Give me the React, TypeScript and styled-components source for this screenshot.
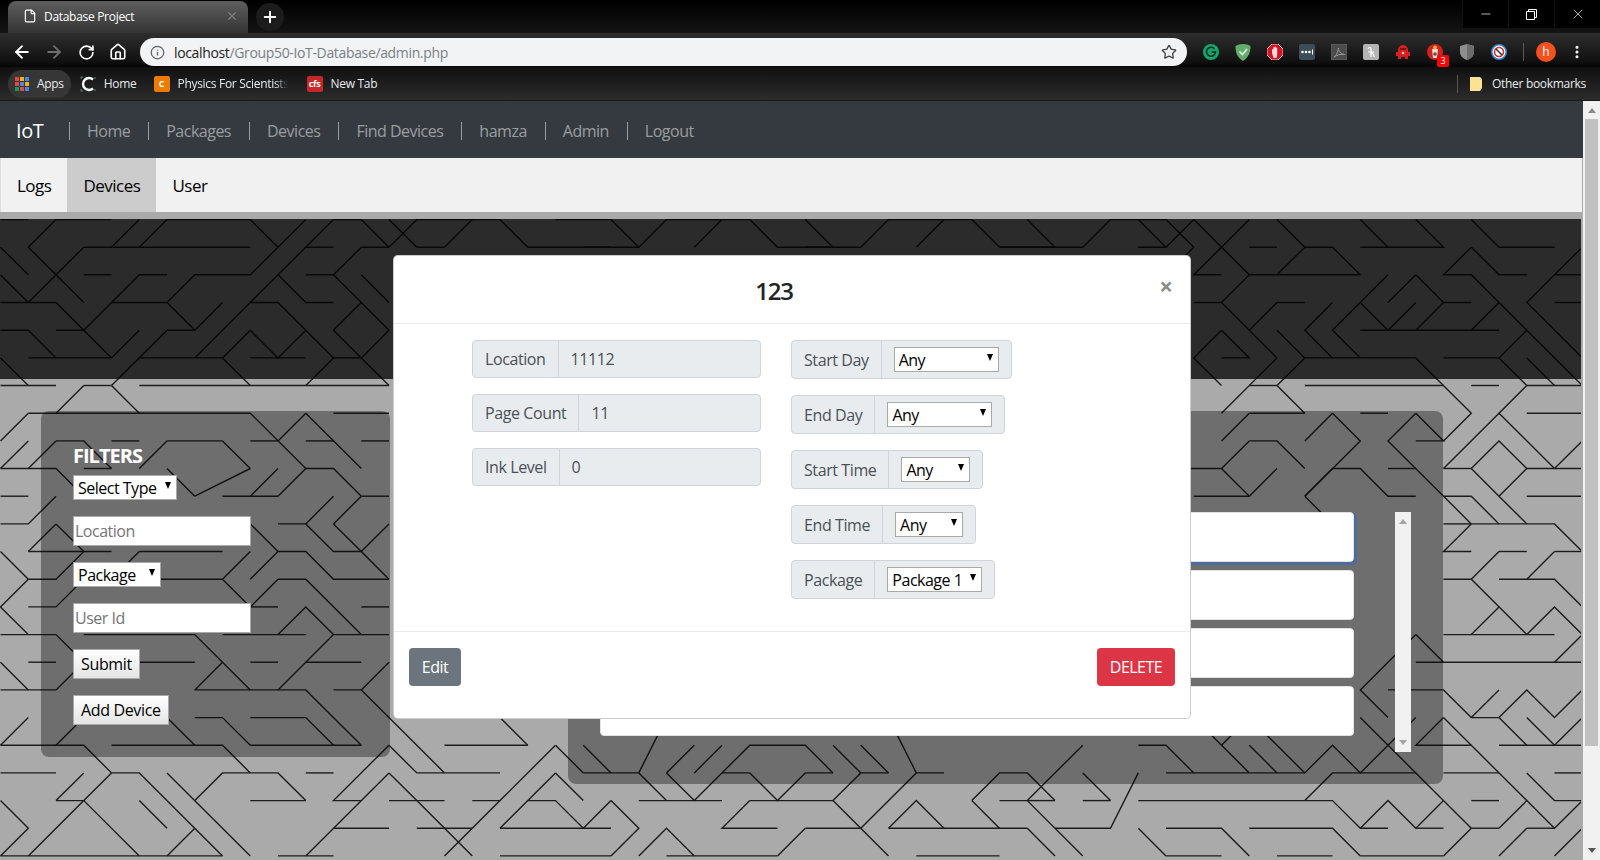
import React from "react"
import styled, { createGlobalStyle } from "styled-components"
import { ArrowLeft, ArrowRight, RotateCw, Home, Star, Info, Minus, X, Plus, File, MoreVertical } from "lucide-react"

const GlobalStyle = createGlobalStyle`
  html, body {
    margin: 0;
    padding: 0;
    overflow: hidden;
    background: #aaa;
  }
  * {
    box-sizing: border-box;
  }
  body, input, select, button {
    font-family: "Open Sans", "Noto Sans", sans-serif;
  }
`

const Page = styled.div`
  position: relative;
  width: 1600px;
  height: 860px;
  overflow: hidden;
  display: flex;
  flex-direction: column;
`

/* browser chrome */
const TabStrip = styled.div`
  height: 33px;
  flex: none;
  background: linear-gradient(#000, #141414);
  display: flex;
  align-items: flex-end;
  padding-left: 8px;
  position: relative;
`

const Tab = styled.div`
  width: 240px;
  height: 32px;
  border-radius: 8px 8px 0 0;
  background: linear-gradient(#5e5e5e, #343434);
  display: flex;
  align-items: center;
  padding: 0 9px 2px 15px;
  color: #fff;
  font-size: 12px;
  letter-spacing: -0.3px;
  gap: 7px;
`

const TabTitle = styled.span`
  flex: 1;
`

const NewTab = styled.div`
  width: 28px;
  height: 28px;
  border-radius: 50%;
  background: #1c1c1c;
  margin: 0 0 2px 8px;
  display: flex;
  align-items: center;
  justify-content: center;
  color: #fff;
`

const WindowControls = styled.div`
  position: absolute;
  right: 0;
  top: 0;
  height: 28px;
  display: flex;
  background: #000;
`

const WindowButton = styled.div`
  width: 46px;
  height: 28px;
  display: flex;
  align-items: center;
  justify-content: center;
  color: #fff;
  border-left: 1px solid #111;
`

const Toolbar = styled.div`
  height: 34px;
  flex: none;
  background: linear-gradient(#2e2e2e, #101010 85%, #050505);
  display: flex;
  align-items: flex-start;
  padding: 5px 0 0 6px;
  position: relative;
  z-index: 1;
`

const ToolButton = styled.div<{ $dim?: boolean }>`
  width: 32px;
  height: 28px;
  display: flex;
  align-items: center;
  justify-content: center;
  color: ${p => (p.$dim ? "#6f6f6f" : "#fff")};
`

const AddressBar = styled.div`
  width: 1047px;
  height: 28px;
  margin-left: 6px;
  border-radius: 14px;
  background: #f1f3f4;
  display: flex;
  align-items: center;
  padding: 0 10px 0 10px;
  font-size: 14px;
  letter-spacing: -0.35px;
  color: #7a8087;
`

const Host = styled.span`
  color: #202124;
`

const AddressText = styled.div`
  flex: 1;
  margin-left: 9px;
`

const Extensions = styled.div`
  display: flex;
  align-items: center;
  height: 28px;
  margin-left: 8px;
`

const ExtensionSlot = styled.div`
  width: 32px;
  height: 28px;
  display: flex;
  align-items: center;
  justify-content: center;
  position: relative;
`

const Badge = styled.span`
  position: absolute;
  right: 2px;
  bottom: -1px;
  width: 12px;
  height: 12px;
  background: #f00;
  color: #fff;
  border-radius: 2px;
  font-size: 9px;
  line-height: 12px;
  text-align: center;
`

const ToolbarDivider = styled.div`
  width: 1px;
  height: 18px;
  margin: 0 7px 0 8px;
  background: #5a5a5a;
`

const Avatar = styled.div`
  width: 20px;
  height: 20px;
  border-radius: 50%;
  background: #f4511e;
  color: #fff;
  font-size: 12px;
  line-height: 20px;
  text-align: center;
  margin: 0 5px;
`

const BookmarksBar = styled.div`
  height: 34px;
  flex: none;
  background: linear-gradient(#101010, #2c2c2c);
  border-bottom: 1px solid #181818;
  display: flex;
  align-items: center;
  padding-left: 8px;
  color: #e8eaed;
  font-size: 12px;
  letter-spacing: -0.3px;
`

const Bookmark = styled.div<{ $chip?: boolean; $left?: number }>`
  display: flex;
  align-items: center;
  gap: 8px;
  height: 28px;
  padding: 0 7px;
  margin-left: ${p => p.$left ?? 0}px;
  border-radius: 14px;
  background: ${p => (p.$chip ? "#363636" : "transparent")};
`

const FadedLabel = styled.span`
  width: 110px;
  white-space: nowrap;
  overflow: hidden;
  -webkit-mask-image: linear-gradient(90deg, #000 88%, transparent);
`

const BookmarkIcon = styled.span<{ $bg: string }>`
  width: 16px;
  height: 16px;
  border-radius: 2px;
  background: ${p => p.$bg};
  color: #fff;
  font-size: 9px;
  font-weight: 700;
  line-height: 16px;
  text-align: center;
`

const OtherBookmarks = styled.div`
  margin-left: auto;
  display: flex;
  align-items: center;
  height: 18px;
  border-left: 1px solid #555;
  padding: 0 14px 0 12px;
  gap: 10px;
`

/* site */
const Viewport = styled.div`
  flex: 1;
  display: flex;
  min-height: 0;
`

const Site = styled.div`
  width: 1583px;
  display: flex;
  flex-direction: column;
`

const NavBar = styled.nav`
  height: 57px;
  flex: none;
  background: #343a40;
  display: flex;
  align-items: center;
  padding: 2px 0 0 16px;
`

const Brand = styled.div`
  color: #fff;
  font-size: 20px;
  width: 53px;
  letter-spacing: -0.4px;
`

const NavLink = styled.a`
  color: rgba(255, 255, 255, 0.5);
  font-size: 16px;
  padding: 0 18px 0 17px;
  line-height: 18px;
  border-left: 1px solid rgba(255, 255, 255, 0.5);
  letter-spacing: -0.5px;
`

const TabBar = styled.div`
  height: 54px;
  flex: none;
  background: #f1f1f1;
  display: flex;
  width: 1582px;
  border-left: 1px solid #ddd;
`

const TabLink = styled.a<{ $active?: boolean }>`
  padding: 0 16px;
  height: 54px;
  font-size: 17px;
  line-height: 56px;
  color: #000;
  letter-spacing: -0.5px;
  background: ${p => (p.$active ? "#ccc" : "transparent")};
`

const Main = styled.main`
  position: relative;
  flex: 1;
  width: 1581px;
  padding-top: 7px;
  background: #aaa;
  overflow: hidden;
`

const Maze = styled.svg`
  position: absolute;
  left: 0;
  top: 7px;
`

const Band = styled.div`
  position: relative;
  height: 160px;
  background: rgba(0, 0, 0, 0.75);
`

const Columns = styled.div`
  position: relative;
  display: flex;
  align-items: flex-start;
  margin-top: 32px;
  padding-left: 41px;
  gap: 178px;
`

const FilterPanel = styled.div`
  width: 349px;
  height: 346px;
  padding: 32px;
  border-radius: 8px;
  background: rgba(0, 0, 0, 0.35);
  display: flex;
  flex-direction: column;
  align-items: flex-start;
  gap: 16px;
`

const FilterHeading = styled.h2`
  margin: 0 0 -16px;
  height: 32px;
  color: #fff;
  font-size: 20px;
  font-weight: 700;
  line-height: 26px;
  letter-spacing: -1px;
`

const SelectWrap = styled.span<{ $width: number }>`
  position: relative;
  display: block;
  width: ${p => p.$width}px;
  height: 25px;
  flex: none;

  &::after {
    content: "";
    position: absolute;
    right: 6px;
    top: 7px;
    border-left: 3.5px solid transparent;
    border-right: 3.5px solid transparent;
    border-top: 7px solid #000;
    pointer-events: none;
  }
`

const Select = styled.select`
  appearance: none;
  display: block;
  width: 100%;
  height: 100%;
  padding: 1px 0 0 4px;
  border: 1px solid #a9a9a9;
  border-radius: 0;
  background: #fff;
  color: #000;
  font-size: 16px;
  letter-spacing: -0.5px;
`

const FilterInput = styled.input`
  width: 178px;
  height: 30px;
  padding: 0 1px;
  border: 1px solid #a9a9a9;
  background: #fff;
  font-size: 16px;
  letter-spacing: -0.5px;

  &::placeholder {
    color: #757575;
  }
`

const PlainButton = styled.button`
  height: 30px;
  padding: 0 7px;
  border: 1px solid #a9a9a9;
  background: linear-gradient(#fff, #e4e4e4);
  color: #000;
  font-size: 16px;
  letter-spacing: -0.35px;
`

const ListPanel = styled.div`
  width: 875px;
  height: 373px;
  padding: 101px 0 0 32px;
  border-radius: 8px;
  background: rgba(0, 0, 0, 0.35);
  display: flex;
  align-items: flex-start;
  gap: 41px;
`

const DeviceList = styled.div`
  width: 754px;
  display: flex;
  flex-direction: column;
  gap: 8px;
`

const DeviceRow = styled.div<{ $focused?: boolean }>`
  height: 50px;
  border-radius: 4px;
  border: 1px solid #e2e2e2;
  background: #fff;
  box-shadow: ${p => (p.$focused ? "2px 2px 0 1px #4a6d9c" : "none")};
`

const ScrollArrow = styled.span<{ $down?: boolean; $color: string }>`
  display: block;
  width: 0;
  height: 0;
  border-left: 4.5px solid transparent;
  border-right: 4.5px solid transparent;
  ${p => (p.$down ? `border-top: 5px solid ${p.$color};` : `border-bottom: 5px solid ${p.$color};`)}
`

const ListScroll = styled.div`
  width: 16px;
  height: 240px;
  padding: 7px 0;
  background: #f1f1f1;
  display: flex;
  flex-direction: column;
  justify-content: space-between;
  align-items: center;
`

/* modal */
const Modal = styled.div`
  position: absolute;
  left: 393px;
  top: 255px;
  width: 798px;
  height: 464px;
  background: #fff;
  border: 1px solid rgba(0, 0, 0, 0.2);
  border-radius: 5px;
  display: flex;
  flex-direction: column;
`

const ModalHeader = styled.div`
  height: 68px;
  flex: none;
  border-bottom: 1px solid #e9ecef;
  display: flex;
  align-items: center;
  padding: 0 16px 0 0;
`

const ModalTitle = styled.h5`
  flex: 1;
  margin: 2px 0 0;
  padding-right: 4px;
  text-align: center;
  color: #212529;
  font-size: 24px;
  font-weight: 600;
  letter-spacing: -1.2px;
`

const Close = styled.span`
  width: 16px;
  margin: -8px 0 0 0;
  color: #8c8c8c;
  font-size: 24px;
  font-weight: 700;
  line-height: 24px;
  text-align: center;
`

const ModalBody = styled.div`
  flex: 1;
  display: flex;
  gap: 30px;
  padding: 16px 0 0 78px;
`

const FieldColumn = styled.div<{ $gap: number; $width: number }>`
  display: flex;
  flex-direction: column;
  align-items: flex-start;
  gap: ${p => p.$gap}px;
  width: ${p => p.$width}px;
`

const InputGroup = styled.div<{ $full?: boolean; $height: number }>`
  display: flex;
  width: ${p => (p.$full ? "100%" : "auto")};
  height: ${p => p.$height}px;
  color: #495057;
  font-size: 16px;
  letter-spacing: -0.4px;
`

const GroupLabel = styled.div`
  display: flex;
  align-items: center;
  padding: 0 12px;
  background: #e9ecef;
  border: 1px solid #ced4da;
  border-radius: 4px 0 0 4px;
  white-space: nowrap;
`

const GroupValue = styled.div`
  flex: 1;
  display: flex;
  align-items: center;
  padding: 0 12px;
  margin-left: -1px;
  background: #e9ecef;
  border: 1px solid #ced4da;
  border-radius: 0 4px 4px 0;
`

const GroupSelect = styled.div`
  display: flex;
  align-items: center;
  padding: 0 12px;
  margin-left: -1px;
  background: #e9ecef;
  border: 1px solid #ced4da;
  border-radius: 0 4px 4px 0;
`

const ModalFooter = styled.div`
  height: 87px;
  flex: none;
  border-top: 1px solid #e9ecef;
  display: flex;
  justify-content: space-between;
  align-items: flex-start;
  padding: 16px 15px;
`

const ActionButton = styled.button<{ $bg: string; $width: number }>`
  width: ${p => p.$width}px;
  height: 38px;
  border: 0;
  border-radius: 4px;
  background: ${p => p.$bg};
  color: #fff;
  font-size: 16px;
  letter-spacing: -0.5px;
`

/* page scrollbar */
const PageScroll = styled.div`
  width: 17px;
  padding: 7px 0;
  background: #f1f1f1;
  display: flex;
  flex-direction: column;
  align-items: center;
`

const ScrollThumb = styled.div`
  width: 13px;
  height: 627px;
  margin-top: 6px;
  background: #c1c1c1;
`

const ScrollEnd = styled.div`
  margin-top: auto;
`

// maze, as polylines in grid cells "col row col row ..."
const MAZE = [
  // left side
  "0 0 1 0", "2 0 1 1 3 3", "2 0 4 0", "6 0 9 0 10 1", "5 0 4 1", "6 0 5 1", "12 0 13 0", "3 1 9 1", "3 1 1 3",
  "11 0 9 2 7 2 6 3 7 4 8 3", "12 0 7 5", "13 0 14 1", "14 0 15 1", "0 1 1 2", "0 2 1 3", "0 3 2 3 4 5", "2 4 3 4", "3 2 4 2",
  "6 2 5 2 3 4", "4 3 6 3", "6 4 7 4", "6 4 4 6", "0 4 1 4 2 5", "1 5 4 5", "5 4 4 5", "5 5 8 5 9 6", "8 5 9 4 10 5 11 4",
  "9 5 11 5", "9 3 10 3 12 5", "10 2 11 3 12 3", "11 1 12 1", "11 2 12 2", "13 1 12 2 14 4", "13 1 14 1", "13 2 14 3",
  "13 3 12 4 13 5 14 4", "12 5 13 5", "12 5 11 6", "13 5 14 6", "0 6 2 6", "0 5 1 6", "5 6 14 6", "3 6 4 6", "2 7 3 6", "4 6 5 7",
  "1 7 9 7 11 9", "1 7 0 8", "11 7 10 8", "11 7 13 9", "12 7 14 7", "4 8 5 8", "1 8 0 9", "2 8 3 8 4 9", "2 8 1 9", "8 8 6 8 5 9",
  "8 8 9 9", "9 8 10 8", "11 8 12 8", "13 8 14 8", "0 9 2 9 3 10", "3 9 4 9", "9 9 7 10", "10 9 9 10", "11 9 10 10", "11 9 12 9 13 10",
  "6 9 7 10", "0 10 1 10", "8 10 10 10", "13 10 14 10", "0 11 1 11 2 10", "2 11 1 12", "2 11 3 12", "1 12 4 12", "5 12 8 12", "5 12 4 13",
  "0 12 1 13 2 13 3 12", "1 13 0 14 1 15", "1 14 2 14 3 13", "0 15 2 15 3 16 2 17", "0 16 1 17", "0 17 2 17", "1 16 2 16",
  "5 13 8 13 9 12", "8 13 9 14 10 13 11 13 13 15", "9 13 10 12 9 11", "10 12 11 12 12 13 14 13", "10 11 11 11 12 12 13 12 14 13", "11 11 12 10", "12 11 13 10",
  "12 11 13 12 14 11", "9 14 10 14", "13 14 14 14", "10 15 11 14 12 15 10 17", "8 15 11 15", "12 15 14 15", "3 15 7 15 9 17",
  "8 16 7 17", "7 17 11 17 13 19", "9 16 10 16", "11 16 13 16", "14 16 13 17", "12 17 13 17 16 20", "4 16 7 16", "7 18 8 18 9 19",
  "9 18 11 18 12 19", "9 19 13 19", "6 18 7 19", "4 19 8 19 9 20", "1 18 0 19", "3 18 2 19", "0 19 3 19 4 20 5 20 8 23", "3 20 2 21", "0 20 2 20",
  "4 20 3 21", "6 20 9 23", "7 21 8 20 10 20 11 21", "11 20 12 20", "14 19 15 20 18 20", "14 19 12 21 13 21", "14 20 15 21", "14 20 11 23", "12 22 14 22",
  "0 21 1 22 0 23", "2 21 3 21 5 23", "3 21 1 23", "5 21 6 22", "7 22 6 23", "9 21 11 21", "0 23 8 23", "10 23 12 23",
  // top strip
  "14 1 15 0 18 0 19 1 23 1 24 0 27 0 28 1 31 1 32 0 35 0 36 1 39 1 40 0 42 0 43 1", "16 1 17 0", "20 0 22 0 23 1", "25 1 26 0", "29 0 30 1",
  "33 1 34 0", "37 0 38 1", "41 0 42 1", "15 1 16 1", "21 1 22 1", "29 1 30 1", "36 1 38 1",
  // right side, upper
  "41 1 42 1 43 0", "45 1 46 1", "44 1 43 2 44 2", "44 1 45 2 46 2 49 2", "43 0 44 1 45 0", "43 1 42 2", "46 0 47 1 46 2", "47 1 48 1 49 2",
  "49 1 52 1 51 0", "50 1 49 0", "54 1 56 1", "54 1 53 0", "45 2 44 3 46 5", "43 3 44 3", "46 3 45 4", "46 3 47 3", "48 3 47 4 48 5",
  "50 2 48 4 49 5", "49 3 50 4", "51 2 50 3", "51 2 52 3 51 4", "51 3 50 4", "52 3 53 3", "49 4 54 4", "53 1 52 2 53 2 55 4", "53 1 54 2 55 2",
  "54 3 53 4", "55 4 54 5 55 6", "52 5 54 5", "55 4 57 6", "57 1 56 2 55 3 57 5", "56 2 57 2", "56 3 57 3", "55 5 56 6", "45 6 46 6", "47 6 52 6", "53 6 54 6", "55 6 57 6",
  "46 4 47 5 46 6", "47 5 51 5 53 7 52 8", "44 4 43 5 44 6", "44 4 45 5 44 5", "46 5 44 7", "46 6 47 7", "45 7 47 7", "45 7 44 8", "49 7 50 7",
  "48 7 47 8", "48 7 49 8 47 10", "51 7 50 8 53 11", "51 7 52 8 51 8", "45 8 46 8 47 9", "45 8 44 9 41 9", "44 9 45 10", "46 9 45 10 43 10",
  "47 10 48 11", "47 10 48 9 49 9 50 10 51 10", "50 9 51 9", "52 9 54 7 56 9", "52 9 53 9", "53 9 54 8 55 9 54 10 53 9", "55 9 57 9", "56 9 57 8", "54 10 55 11",
  "52 10 53 10 54 11", "55 7 57 7", "55 6 54 7", "55 10 57 10", "52 11 53 11", "53 11 56 11 57 12", "53 11 52 12 53 12", "56 12 55 13", "54 12 55 12", "54 12 53 13", "56 12 57 12",
  "52 13 53 13 55 15", "54 13 56 13 57 14", "54 14 53 15", "55 15 56 14 57 15 56 16", "52 15 56 15", "51 16 57 16", "51 15 52 16", "51 15 50 16", "50 16 49 17 50 18",
  "50 17 52 17 53 18 54 18", "53 18 54 17", "54 18 55 17 56 18 57 17", "54 18 55 19", "55 18 56 19 57 18", "54 19 57 19", "52 18 51 19 53 19", "52 18 55 21",
  "52 20 54 20", "55 20 56 21 57 21", "56 20 57 20", "53 21 54 21", "54 22 55 21 56 22 57 21", "53 22 54 22", "42 20 47 20 48 19 49 20 51 18", "47 21 48 20 51 20 53 22 52 23",
  "41 21 48 21 49 22 50 22", "49 22 50 21 51 22 52 21", "51 22 52 22", "42 22 44 22 45 23", "45 22 48 22 49 23", "42 23 44 23", "41 22 42 23", "46 23 48 23", "49 23 52 23", "55 22 54 23", "55 22 56 22", "57 22 56 23",
  "41 19 42 19 43 20", "43 18 45 20", "44 19 45 18", "45 19 46 20", "45 18 47 20", "49 18 51 20",
  // bottom strip
  "16 19 19 19", "18 18 19 19", "20 19 18 21 17 21", "20 19 21 20", "15 21 17 23", "14 21 16 21", "18 21 16 23", "20 20 18 22", "20 20 21 21", "19 21 20 21 21 22", "18 22 22 22", "15 22 17 22",
  "22 21 21 22", "22 21 23 22 22 23", "23 23 24 22 25 23", "23 21 26 21", "21 19 22 20", "21 20 23 20 24 21", "23 20 24 18", "24 20 25 21 27 19 29 19 30 20", "24 20 25 19", "26 20 27 20 28 21 29 20 30 20",
  "25 20 26 19", "27 21 30 21", "27 21 26 22 28 22", "30 21 31 20 32 20", "30 19 31 20", "31 19 32 20", "30 21 31 22 33 20 34 20", "32 18 33 20", "29 22 31 22 32 23", "29 22 28 23", "32 22 37 22",
  "32 22 33 21 34 22", "35 21 36 22", "35 21 36 20 37 20 38 21", "36 21 37 21 39 23", "37 22 38 23", "37 21 38 21", "39 21 40 21", "37 21 39 19", "39 20 40 21", "41 20 40 22 38 22", "18 23 22 23", "24 23 28 23", "33 23 36 23",
]

const CELL_X = 27.75
const CELL_Y = 27.67

const mazePath = (line: string) => {
  const n = line.split(" ").map(Number)
  let d = ""
  for (let i = 0; i < n.length; i += 2) {
    d += `${i === 0 ? "M" : "L"}${(n[i] * CELL_X + 0.5).toFixed(1)} ${(n[i + 1] * CELL_Y + 0.5).toFixed(1)}`
  }
  return d
}

function MazeBackground() {
  return (
    <Maze width="1581" height="641" fill="none" stroke="#1c1c1c" strokeWidth="1.4">
      {MAZE.map((line, i) => <path key={i} d={mazePath(line)} />)}
    </Maze>
  )
}

const APPS_COLORS = ["#e8453c", "#f4b400", "#4285f4", "#e8453c", "#4285f4", "#f4b400", "#0f9d58", "#e8453c", "#4285f4"]

function AppsIcon() {
  return (
    <svg width="14" height="14" viewBox="0 0 14 14">
      {APPS_COLORS.map((c, i) => (
        <rect key={i} x={(i % 3) * 5} y={Math.floor(i / 3) * 5} width="4" height="4" fill={c} />
      ))}
    </svg>
  )
}

function HomeSiteIcon() {
  return (
    <svg width="16" height="16" viewBox="0 0 16 16" fill="none">
      <path d="M13 3.500A6 6 0 1 0 13 12.500" stroke="#fff" strokeWidth="2.400" />
      <path d="M1 1v2M1 1h2M15 1v2M1 15v-2M1 15h2M15 15v-2" stroke="#5a7" strokeWidth="0.800" />
    </svg>
  )
}

function FolderIcon() {
  return (
    <svg width="12" height="14" viewBox="0 0 12 14">
      <path d="M0 0h10l2 2v9l-2 3H0z" fill="#fde293" />
    </svg>
  )
}

function GrammarlyIcon() {
  return (
    <svg width="16" height="16" viewBox="0 0 16 16">
      <circle cx="8" cy="8" r="8" fill="#15a66f" />
      <path d="M11.600 5A4.500 4.500 0 1 0 12.500 8H8.500" fill="none" stroke="#08321f" strokeWidth="1.600" />
    </svg>
  )
}

function AdGuardIcon() {
  return (
    <svg width="16" height="17" viewBox="0 0 16 17">
      <path d="M8 0C5 0 2.500 .8 .5 2c0 6 1 11 7.500 15C14 13 15.500 8 15.500 2 13.500 .8 11 0 8 0z" fill="#62ad6a" />
      <path d="M4.500 7.500 7.500 10.500 12 5" fill="none" stroke="#e8f5e9" strokeWidth="1.600" />
    </svg>
  )
}

function UBlockIcon() {
  return (
    <svg width="16" height="16" viewBox="0 0 16 16">
      <path d="M5 0h6l5 5v6l-5 5H5l-5-5V5z" fill="#d6121f" stroke="#eee" strokeWidth="0.800" />
      <path d="M5 9V5.500a.8.8 0 0 1 1.300 0V3.500a.8.8 0 0 1 1.300 0V3a.8.8 0 0 1 1.300 0v1a.8.8 0 0 1 1.300 0v6.500L9.500 14h-3z" fill="#f2dcdc" />
    </svg>
  )
}

function LastPassIcon() {
  return (
    <svg width="16" height="16" viewBox="0 0 16 16">
      <rect width="16" height="16" rx="2" fill="#3d4c59" />
      <circle cx="3.500" cy="8" r="1.300" fill="#fff" />
      <circle cx="7" cy="8" r="1.300" fill="#fff" />
      <circle cx="10.500" cy="8" r="1.300" fill="#fff" />
      <rect x="13" y="5.500" width="1" height="5" fill="#fff" />
    </svg>
  )
}

function AcrobatIcon() {
  return (
    <svg width="16" height="16" viewBox="0 0 16 16">
      <rect width="16" height="16" fill="#4c4c4c" stroke="#666" />
      <path d="M3 13c2-1 4-5 4.500-9 0 4 2.500 6 6 6.500-3-.5-7 0-10.500 2.500z" fill="none" stroke="#999" />
    </svg>
  )
}

function FontIcon() {
  return (
    <svg width="16" height="16" viewBox="0 0 16 16">
      <rect width="16" height="16" rx="2" fill="#b4b4b4" />
      <path d="M5 5c1-2 3-2 3 0v8M5 8h6M8 9c2 0 3 1 3 4" fill="none" stroke="#fff" strokeWidth="1.200" />
    </svg>
  )
}

function GhostIcon() {
  return (
    <svg width="16" height="16" viewBox="0 0 16 16">
      <path d="M3 6a5 5 0 0 1 10 0v2h2v4h-2v3h-3v-2H6v2H3v-3H1V8h2z" fill="#d81e1e" />
      <circle cx="8" cy="9" r="1.300" fill="#f5c6c6" />
      <rect x="5" y="4" width="6" height="2" fill="#7a0f0f" />
    </svg>
  )
}

function PopcornIcon() {
  return (
    <svg width="16" height="16" viewBox="0 0 16 16">
      <circle cx="8" cy="8" r="8" fill="#d81e1e" />
      <path d="M5 5h6l-1 9H6z" fill="#e8e0d0" />
      <circle cx="8" cy="3.500" r="2" fill="#e8b13a" />
      <circle cx="8" cy="10" r="1.800" fill="#555" />
    </svg>
  )
}

function ShieldIcon() {
  return (
    <svg width="14" height="16" viewBox="0 0 14 16">
      <path d="M7 0 14 2v6c0 4-3 6.500-7 8-4-1.500-7-4-7-8V2z" fill="#8e8e8e" />
      <path d="M7 0 14 2v6c0 4-3 6.500-7 8z" fill="#6d6d6d" />
    </svg>
  )
}

function BlockedIcon() {
  return (
    <svg width="16" height="16" viewBox="0 0 16 16" fill="none">
      <circle cx="8" cy="8" r="7.200" fill="#fff" stroke="#3f82d1" strokeWidth="1.600" />
      <circle cx="8" cy="8" r="4.500" stroke="#c9302c" strokeWidth="1.600" />
      <path d="M5 5l6 6" stroke="#333" strokeWidth="1.600" />
    </svg>
  )
}

const ChromeExtensions = [GrammarlyIcon, AdGuardIcon, UBlockIcon, LastPassIcon, AcrobatIcon, FontIcon, GhostIcon, PopcornIcon, ShieldIcon, BlockedIcon]

function BrowserChrome() {
  return (
    <>
      <TabStrip>
        <Tab>
          <File size={14} />
          <TabTitle>Database Project</TabTitle>
          <X size={14} color="#7b7b7b" />
        </Tab>
        <NewTab><Plus size={18} strokeWidth={2.6} /></NewTab>
        <WindowControls>
          <WindowButton><Minus size={14} strokeWidth={1.2} /></WindowButton>
          <WindowButton>
            <svg width="11" height="11" viewBox="0 0 11 11" fill="none" stroke="#fff">
              <path d="M.5 2.500h8v8h-8zM2.500 2.500v-2h8v8h-2" />
            </svg>
          </WindowButton>
          <WindowButton><X size={16} strokeWidth={1} /></WindowButton>
        </WindowControls>
      </TabStrip>
      <Toolbar>
        <ToolButton><ArrowLeft size={20} strokeWidth={2.2} /></ToolButton>
        <ToolButton $dim><ArrowRight size={20} strokeWidth={2.2} /></ToolButton>
        <ToolButton><RotateCw size={17} strokeWidth={2.4} /></ToolButton>
        <ToolButton><Home size={18} strokeWidth={2.2} /></ToolButton>
        <AddressBar>
          <Info size={15} color="#5f6368" />
          <AddressText><Host>localhost</Host>/Group50-IoT-Database/admin.php</AddressText>
          <Star size={16} color="#444" strokeWidth={2} />
        </AddressBar>
        <Extensions>
          {ChromeExtensions.map((Icon, i) => (
            <ExtensionSlot key={i}>
              <Icon />
              {i === 7 && <Badge>3</Badge>}
            </ExtensionSlot>
          ))}
          <ToolbarDivider />
          <Avatar>h</Avatar>
          <ToolButton><MoreVertical size={16} strokeWidth={2.6} /></ToolButton>
        </Extensions>
      </Toolbar>
      <BookmarksBar>
        <Bookmark $chip><AppsIcon />Apps</Bookmark>
        <Bookmark $left={2}><HomeSiteIcon />Home</Bookmark>
        <Bookmark $left={3}><BookmarkIcon $bg="#ee7c00">C</BookmarkIcon><FadedLabel>Physics For Scientists</FadedLabel></Bookmark>
        <Bookmark $left={5}><BookmarkIcon $bg="#c62828">cfs</BookmarkIcon>New Tab</Bookmark>
        <OtherBookmarks><FolderIcon />Other bookmarks</OtherBookmarks>
      </BookmarksBar>
    </>
  )
}

const LEFT_FIELDS = [
  { label: "Location", value: "11112" },
  { label: "Page Count", value: "11" },
  { label: "Ink Level", value: "0" },
]

const RIGHT_FIELDS = [
  { label: "Start Day", option: "Any", width: 105 },
  { label: "End Day", option: "Any", width: 105 },
  { label: "Start Time", option: "Any", width: 69 },
  { label: "End Time", option: "Any", width: 68 },
  { label: "Package", option: "Package 1", width: 95 },
]

export default function App() {
  return (
    <Page>
      <GlobalStyle />
      <BrowserChrome />
      <Viewport>
        <Site>
          <NavBar>
            <Brand>IoT</Brand>
            {["Home", "Packages", "Devices", "Find Devices", "hamza", "Admin", "Logout"].map(item => (
              <NavLink key={item}>{item}</NavLink>
            ))}
          </NavBar>
          <TabBar>
            <TabLink>Logs</TabLink>
            <TabLink $active>Devices</TabLink>
            <TabLink>User</TabLink>
          </TabBar>
          <Main>
            <MazeBackground />
            <Band />
            <Columns>
              <FilterPanel>
                <FilterHeading>FILTERS</FilterHeading>
                <SelectWrap $width={104}><Select><option>Select Type</option></Select></SelectWrap>
                <FilterInput placeholder="Location" />
                <SelectWrap $width={88}><Select><option>Package</option></Select></SelectWrap>
                <FilterInput placeholder="User Id" />
                <PlainButton>Submit</PlainButton>
                <PlainButton>Add Device</PlainButton>
              </FilterPanel>
              <ListPanel>
                <DeviceList>
                  <DeviceRow $focused />
                  <DeviceRow />
                  <DeviceRow />
                  <DeviceRow />
                </DeviceList>
                <ListScroll>
                  <ScrollArrow $color="#a3a3a3" />
                  <ScrollArrow $down $color="#a3a3a3" />
                </ListScroll>
              </ListPanel>
            </Columns>
          </Main>
        </Site>
        <PageScroll>
          <ScrollArrow $color="#8a8a8a" />
          <ScrollThumb />
          <ScrollEnd><ScrollArrow $down $color="#555" /></ScrollEnd>
        </PageScroll>
      </Viewport>
      <Modal>
        <ModalHeader>
          <ModalTitle>123</ModalTitle>
          <Close>×</Close>
        </ModalHeader>
        <ModalBody>
          <FieldColumn $gap={16} $width={289}>
            {LEFT_FIELDS.map(f => (
              <InputGroup $full $height={38} key={f.label}>
                <GroupLabel>{f.label}</GroupLabel>
                <GroupValue>{f.value}</GroupValue>
              </InputGroup>
            ))}
          </FieldColumn>
          <FieldColumn $gap={16} $width={240}>
            {RIGHT_FIELDS.map(f => (
              <InputGroup $height={39} key={f.label}>
                <GroupLabel>{f.label}</GroupLabel>
                <GroupSelect>
                  <SelectWrap $width={f.width}><Select><option>{f.option}</option></Select></SelectWrap>
                </GroupSelect>
              </InputGroup>
            ))}
          </FieldColumn>
        </ModalBody>
        <ModalFooter>
          <ActionButton $bg="#6c757d" $width={52}>Edit</ActionButton>
          <ActionButton $bg="#dc3545" $width={78}>DELETE</ActionButton>
        </ModalFooter>
      </Modal>
    </Page>
  )
}
